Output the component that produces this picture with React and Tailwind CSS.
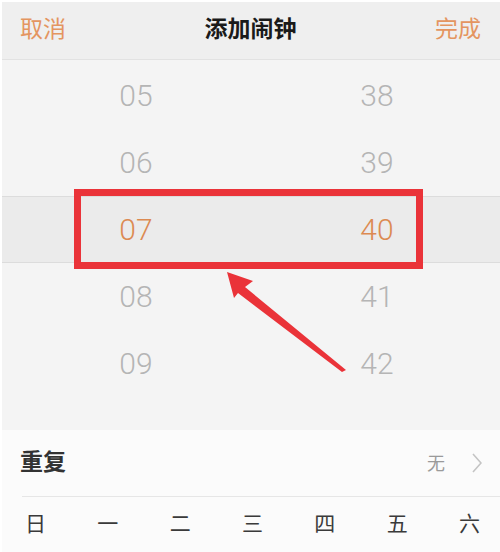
import React from "react";

const hours = ["05", "06", "07", "08", "09"];
const minutes = ["38", "39", "40", "41", "42"];
const days = ["日", "一", "二", "三", "四", "五", "六"];

const App = () => {
    return (
        <div className="relative w-[500px] h-[552px] overflow-hidden bg-white pl-[2px] pt-[2px] font-['Roboto','Noto_Sans_CJK_SC',sans-serif]">
            {/* header */}
            <div className="flex h-[58px] items-center justify-between bg-[#efefef] pl-[18px] pr-[19px] border-b border-[#e2e2e2]">
                <span className="text-[23px] text-[#e49560]">取消</span>
                <span className="text-[23px] font-bold text-[#1a1a1a]">添加闹钟</span>
                <span className="text-[23px] text-[#e49560]">完成</span>
            </div>

            {/* picker */}
            <div className="h-[370px] bg-[#f4f4f4] pt-[2px]">
                {hours.map((h, i) => (
                    <div
                        key={h}
                        className={
                            i === 2
                                ? "flex h-[67px] items-center border-y border-[#dcdcdc] bg-[#ebebeb]"
                                : "flex h-[67px] items-center"
                        }
                    >
                        <span
                            className={
                                i === 2
                                    ? "w-[268px] text-center text-[30px] font-light text-[#dc8a52]"
                                    : "w-[268px] text-center text-[30px] font-light text-[#b5b5b5]"
                            }
                        >
                            {h}
                        </span>
                        <span
                            className={
                                i === 2
                                    ? "w-[214px] text-center text-[30px] font-light text-[#dc8a52]"
                                    : "w-[214px] text-center text-[30px] font-light text-[#b5b5b5]"
                            }
                        >
                            {minutes[i]}
                        </span>
                    </div>
                ))}
            </div>

            {/* repeat */}
            <div className="bg-[#fbfbfb]">
                <div className="flex h-[66px] items-center justify-between pl-[18px] pr-[18px]">
                    <span className="text-[23px] font-bold text-[#333]">重复</span>
                    <div className="flex items-center gap-[27px]">
                        <span className="text-[18px] text-[#9a9a9a]">无</span>
                        <svg width="10" height="20" viewBox="0 0 10 20">
                            <path d="M1 1 L9 10 L1 19" fill="none" stroke="#c4c4c4" strokeWidth="1.6" />
                        </svg>
                    </div>
                </div>
                <div className="ml-[20px] border-t border-[#e6e6e6]" />
                <div className="flex h-[56px] items-center justify-between pl-[23px] pr-[20px] text-[21px] text-[#3a3a3a]">
                    {days.map((d) => (
                        <span key={d}>{d}</span>
                    ))}
                </div>
            </div>

            {/* annotation */}
            <div className="absolute left-[74px] top-[189px] h-[80px] w-[349px] border-[7px] border-[#ea3339]" />
            <svg className="absolute left-0 top-0" width="500" height="552" viewBox="0 0 500 552">
                <polygon
                    points="227,272 253,281 245,287 346,370 342,372 238,293 234,298"
                    fill="#ea3339"
                />
            </svg>
        </div>
    );
};

export default App;
